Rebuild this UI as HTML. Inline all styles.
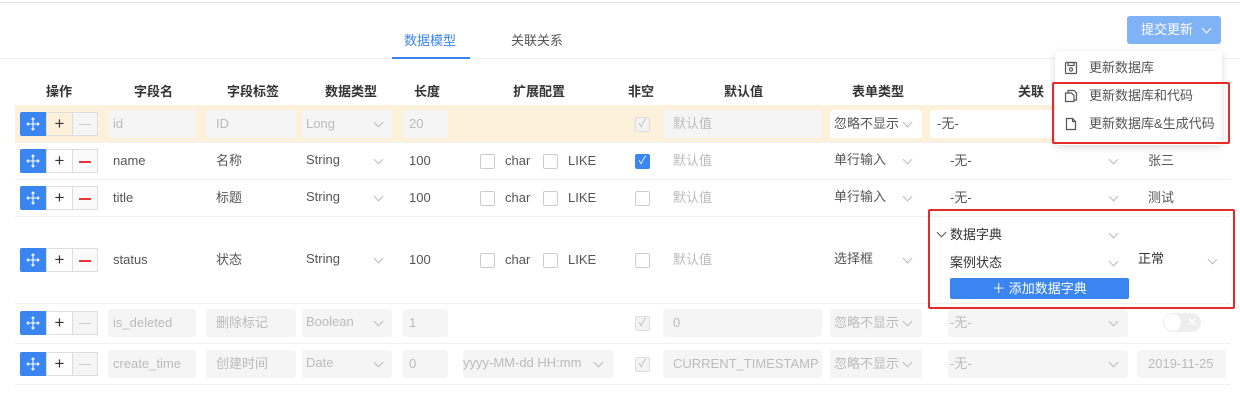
<!DOCTYPE html><html><head><meta charset="utf-8"><style>
body{margin:0;width:1240px;height:408px;background:#fff;position:relative;overflow:hidden;font-family:"Liberation Sans","Noto Sans CJK SC",sans-serif;font-size:13px;color:#555}
.a{position:absolute;white-space:nowrap;line-height:16px}
.h{font-weight:bold;color:#333;font-size:13px;top:84px}
.in{position:absolute;background:#f5f5f5;border-radius:3px;height:28px}
.g{color:#bbb}
.ops{position:absolute;left:20px;width:78px;height:24px}
.ops .b{position:absolute;left:0;top:0;width:26px;height:24px;background:#3a85f0;border-radius:2px 0 0 2px}
.ops .b svg{position:absolute;left:6px;top:5px}
.ops .p{position:absolute;left:26px;top:0;width:25px;height:22px;border:1px solid #ddd;text-align:center;line-height:21px;font-size:17px;color:#333}
.ops .m{position:absolute;left:52px;top:0;width:24px;height:22px;border:1px solid #ddd;background:#f5f5f5}
.ops .m:after{content:"";position:absolute;left:6px;top:11px;width:12px;height:1px;background:#ccc}
.ops .m.r{background:#fafafa}
.ops .m.r:after{background:#e33;height:1.5px}
.cb{position:absolute;width:13px;height:13px;border:1px solid #ccc;border-radius:2px;background:#fff}
.ar{position:absolute;width:6px;height:6px;border-right:1px solid #bbb;border-bottom:1px solid #bbb;transform:rotate(45deg)}
.rl{position:absolute;left:15px;width:1215px;height:1px;background:#f0f0f0}
</style></head><body>
<svg width="0" height="0" style="position:absolute"><defs><symbol id="mv" viewBox="0 0 14 14"><path d="M7 1v12M1 7h12M5.5 2.5L7 1l1.5 1.5M5.5 11.5L7 13l1.5-1.5M2.5 5.5L1 7l1.5 1.5M11.5 5.5L13 7l-1.5 1.5" stroke="#fff" stroke-width="1.1" fill="none"/></symbol></defs></svg>
<div class="a" style="left:0;top:2px;width:1240px;height:1px;background:#e4e4e4"></div>
<div class="a" style="left:0;top:58px;width:1240px;height:1px;background:#eee"></div>
<div class="a" style="left:404px;top:33px;color:#3a85f0;font-size:13px">数据模型</div>
<div class="a" style="left:392px;top:57px;width:78px;height:2px;background:#3a85f0"></div>
<div class="a" style="left:511px;top:33px;color:#555">关联关系</div>
<div class="a" style="left:1127px;top:16px;width:94px;height:28px;background:#80b2f6;border-radius:3px;color:#fff;line-height:28px;font-size:13px"><span style="margin-left:14px">提交更新</span><span class="ar" style="left:76px;top:9px;border-color:#fff"></span></div>

<div class="a h" style="left:46px">操作</div><div class="a h" style="left:134px">字段名</div><div class="a h" style="left:227px">字段标签</div><div class="a h" style="left:325px">数据类型</div><div class="a h" style="left:414px">长度</div><div class="a h" style="left:513px">扩展配置</div><div class="a h" style="left:628px">非空</div><div class="a h" style="left:724px">默认值</div><div class="a h" style="left:852px">表单类型</div><div class="a h" style="left:1018px">关联</div>

<!-- row1 -->
<div class="a" style="left:15px;top:105px;width:1115px;height:37px;background:#fdf1dc"></div>
<div class="ops" style="top:112px"><div class="b"><svg width="14" height="14"><use href="#mv"/></svg></div><div class="p">+</div><div class="m"></div></div>
<div class="in" style="left:108px;top:110px;width:88px"></div><div class="a g" style="left:113px;top:116px">id</div>
<div class="in" style="left:206px;top:110px;width:90px"></div><div class="a g" style="left:216px;top:116px">ID</div>
<div class="in" style="left:302px;top:110px;width:90px"></div><div class="a g" style="left:306px;top:116px">Long</div><div class="ar" style="left:375px;top:119px"></div>
<div class="in" style="left:403px;top:110px;width:45px"></div><div class="a g" style="left:409px;top:116px">20</div>
<div class="cb" style="left:635px;top:117px;background:#f3f3f3;border-color:#ddd;color:#bbb;font-size:11px;line-height:13px;text-align:center">✓</div>
<div class="in" style="left:663px;top:110px;width:159px"></div><div class="a g" style="left:673px;top:116px">默认值</div>
<div class="in" style="left:830px;top:110px;width:92px;background:#fff"></div><div class="a" style="left:834px;top:116px">忽略不显示</div><div class="ar" style="left:904px;top:119px"></div>
<div class="in" style="left:930px;top:110px;width:196px;background:#fff"></div><div class="a" style="left:937px;top:116px">-无-</div>

<div class="rl" style="top:142px"></div>
<!-- row2 -->
<div class="ops" style="top:149px"><div class="b"><svg width="14" height="14"><use href="#mv"/></svg></div><div class="p">+</div><div class="m r"></div></div>
<div class="a" style="left:113px;top:153px">name</div><div class="a" style="left:216px;top:153px">名称</div><div class="a" style="left:306px;top:152px">String</div><div class="ar" style="left:375px;top:156px"></div><div class="a" style="left:409px;top:153px">100</div>
<div class="cb" style="left:480px;top:154px"></div><div class="a" style="left:505px;top:153px">char</div><div class="cb" style="left:543px;top:154px"></div><div class="a" style="left:568px;top:153px">LIKE</div>
<div class="cb" style="left:635px;top:154px;background:#3a85f0;border-color:#3a85f0;color:#fff;font-size:11px;line-height:13px;text-align:center">✓</div>
<div class="a g" style="left:673px;top:153px">默认值</div><div class="a" style="left:834px;top:152px">单行输入</div><div class="ar" style="left:904px;top:156px"></div>
<div class="a" style="left:950px;top:153px">-无-</div><div class="ar" style="left:1110px;top:156px"></div><div class="a" style="left:1148px;top:153px">张三</div>
<div class="rl" style="top:179px"></div>
<!-- row3 -->
<div class="ops" style="top:186px"><div class="b"><svg width="14" height="14"><use href="#mv"/></svg></div><div class="p">+</div><div class="m r"></div></div>
<div class="a" style="left:113px;top:190px">title</div><div class="a" style="left:216px;top:190px">标题</div><div class="a" style="left:306px;top:189px">String</div><div class="ar" style="left:375px;top:193px"></div><div class="a" style="left:409px;top:190px">100</div>
<div class="cb" style="left:480px;top:191px"></div><div class="a" style="left:505px;top:190px">char</div><div class="cb" style="left:543px;top:191px"></div><div class="a" style="left:568px;top:190px">LIKE</div>
<div class="cb" style="left:635px;top:191px"></div>
<div class="a g" style="left:673px;top:190px">默认值</div><div class="a" style="left:834px;top:189px">单行输入</div><div class="ar" style="left:904px;top:193px"></div>
<div class="a" style="left:950px;top:190px">-无-</div><div class="ar" style="left:1110px;top:193px"></div><div class="a" style="left:1148px;top:190px">测试</div>
<div class="rl" style="top:216px"></div>
<!-- row4 -->
<div class="ops" style="top:248px"><div class="b"><svg width="14" height="14"><use href="#mv"/></svg></div><div class="p">+</div><div class="m r"></div></div>
<div class="a" style="left:113px;top:252px">status</div><div class="a" style="left:216px;top:252px">状态</div><div class="a" style="left:306px;top:251px">String</div><div class="ar" style="left:375px;top:255px"></div><div class="a" style="left:409px;top:252px">100</div>
<div class="cb" style="left:480px;top:253px"></div><div class="a" style="left:505px;top:252px">char</div><div class="cb" style="left:543px;top:253px"></div><div class="a" style="left:568px;top:252px">LIKE</div>
<div class="cb" style="left:635px;top:253px"></div>
<div class="a g" style="left:673px;top:252px">默认值</div><div class="a" style="left:834px;top:251px">选择框</div><div class="ar" style="left:904px;top:255px"></div>
<div class="ar" style="left:938px;top:229px;border-color:#555"></div><div class="a" style="left:950px;top:227px;color:#333">数据字典</div><div class="ar" style="left:1110px;top:230px"></div>
<div class="a" style="left:950px;top:255px;color:#333">案例状态</div><div class="ar" style="left:1110px;top:258px"></div>
<div class="a" style="left:950px;top:278px;width:179px;height:21px;background:#3a85f0;border-radius:2px;color:#fff;text-align:center;line-height:21px">＋ 添加数据字典</div>
<div class="a" style="left:1138px;top:251px;color:#333">正常</div><div class="ar" style="left:1209px;top:256px"></div>
<div class="rl" style="top:303px"></div>
<!-- row5 -->
<div class="ops" style="top:311px"><div class="b"><svg width="14" height="14"><use href="#mv"/></svg></div><div class="p">+</div><div class="m"></div></div>
<div class="in" style="left:108px;top:309px;width:88px"></div><div class="a g" style="left:113px;top:315px">is_deleted</div>
<div class="in" style="left:206px;top:309px;width:90px"></div><div class="a g" style="left:216px;top:315px">删除标记</div>
<div class="in" style="left:302px;top:309px;width:90px"></div><div class="a g" style="left:306px;top:314px">Boolean</div><div class="ar" style="left:375px;top:318px"></div>
<div class="in" style="left:403px;top:309px;width:45px"></div><div class="a g" style="left:409px;top:315px">1</div>
<div class="cb" style="left:635px;top:316px;background:#f3f3f3;border-color:#ddd;color:#bbb;font-size:11px;line-height:13px;text-align:center">✓</div>
<div class="in" style="left:663px;top:309px;width:159px"></div><div class="a g" style="left:673px;top:315px">0</div>
<div class="in" style="left:830px;top:309px;width:92px"></div><div class="a g" style="left:834px;top:315px">忽略不显示</div><div class="ar" style="left:904px;top:318px"></div>
<div class="in" style="left:948px;top:309px;width:180px"></div><div class="a g" style="left:950px;top:315px">-无-</div><div class="ar" style="left:1110px;top:318px"></div>
<div class="a" style="left:1163px;top:313px;width:38px;height:19px;border-radius:10px;background:#eee"><div style="position:absolute;left:1px;top:1px;width:17px;height:17px;border-radius:50%;background:#fff"></div><span style="position:absolute;left:24px;top:1px;color:#fff;font-size:12px">✕</span></div>
<div class="rl" style="top:343px"></div>
<!-- row6 -->
<div class="ops" style="top:352px"><div class="b"><svg width="14" height="14"><use href="#mv"/></svg></div><div class="p">+</div><div class="m"></div></div>
<div class="in" style="left:108px;top:350px;width:88px"></div><div class="a g" style="left:113px;top:356px">create_time</div>
<div class="in" style="left:206px;top:350px;width:90px"></div><div class="a g" style="left:216px;top:356px">创建时间</div>
<div class="in" style="left:302px;top:350px;width:90px"></div><div class="a g" style="left:306px;top:355px">Date</div><div class="ar" style="left:375px;top:359px"></div>
<div class="in" style="left:403px;top:350px;width:45px"></div><div class="a g" style="left:409px;top:356px">0</div>
<div class="in" style="left:463px;top:350px;width:150px"></div><div class="a g" style="left:463px;top:355px">yyyy-MM-dd HH:mm</div><div class="ar" style="left:595px;top:359px"></div>
<div class="cb" style="left:635px;top:357px;background:#f3f3f3;border-color:#ddd;color:#bbb;font-size:11px;line-height:13px;text-align:center">✓</div>
<div class="in" style="left:663px;top:350px;width:159px"></div><div class="a g" style="left:673px;top:356px">CURRENT_TIMESTAMP</div>
<div class="in" style="left:830px;top:350px;width:92px"></div><div class="a g" style="left:834px;top:356px">忽略不显示</div><div class="ar" style="left:904px;top:359px"></div>
<div class="in" style="left:948px;top:350px;width:180px"></div><div class="a g" style="left:950px;top:356px">-无-</div><div class="ar" style="left:1110px;top:359px"></div>
<div class="in" style="left:1137px;top:350px;width:89px"></div><div class="a g" style="left:1148px;top:356px">2019-11-25</div>
<div class="rl" style="top:384px"></div>

<!-- dropdown -->
<div class="a" style="left:1055px;top:51px;width:167px;height:94px;background:#fff;box-shadow:0 2px 8px rgba(0,0,0,.15);border-radius:3px"></div>
<svg class="a" style="left:1064px;top:61px" width="14" height="14" viewBox="0 0 14 14" fill="none" stroke="#555" stroke-width="1.2"><rect x="1.5" y="1.5" width="11" height="11" rx="1"/><rect x="4" y="1.5" width="6" height="3"/><circle cx="7" cy="8.5" r="1.6"/></svg>
<div class="a" style="left:1089px;top:60px;color:#555">更新数据库</div>
<svg class="a" style="left:1064px;top:89px" width="14" height="14" viewBox="0 0 14 14" fill="none" stroke="#555" stroke-width="1.2"><path d="M4 4V1.5h6l2.5 2.5v7H10"/><path d="M1.5 4h6l2.5 2.5v6H1.5z"/></svg>
<div class="a" style="left:1089px;top:88px;color:#555">更新数据库和代码</div>
<svg class="a" style="left:1064px;top:117px" width="14" height="14" viewBox="0 0 14 14" fill="none" stroke="#555" stroke-width="1.2"><path d="M2.5 1.5h6l3 3v8h-9z"/><path d="M8.5 1.5v3h3"/></svg>
<div class="a" style="left:1089px;top:116px;color:#555">更新数据库&amp;生成代码</div>
<div class="a" style="left:1052px;top:82px;width:174px;height:58px;border:2px solid #e52a2a;border-radius:2px"></div>
<div class="a" style="left:928px;top:209px;width:303px;height:96px;border:2px solid #e52a2a;border-radius:2px"></div>
</body></html>
